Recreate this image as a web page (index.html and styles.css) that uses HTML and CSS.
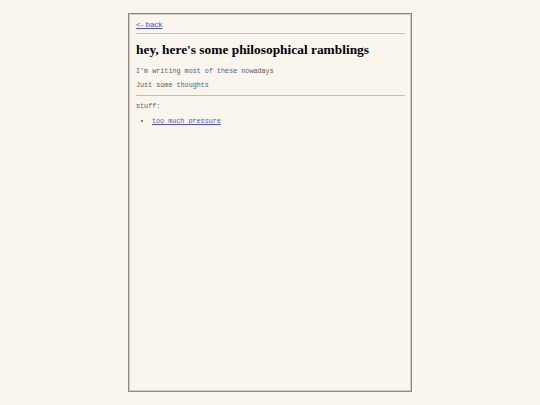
FILE: index.html
```html
<!DOCTYPE html>
<html>
<head>
<meta charset="utf-8">
<link rel="stylesheet" href="styles.css">
</head>
<body>
<div class="page">
  <a class="back" href="#">&lt;- back</a>
  <hr class="rule">
  <h1 class="title">hey, here's some philosophical ramblings</h1>
  <p class="text text-first">I'm writing most of these nowadays</p>
  <p class="text">Just some thoughts</p>
  <hr class="rule rule-mid">
  <p class="text">stuff:</p>
  <ul class="list">
    <li><a href="#">too much pressure</a></li>
  </ul>
</div>
</body>
</html>
```
FILE: styles.css
```css
html, body {
  margin: 0;
  padding: 0;
  background: #faf6ee;
}
.page {
  box-sizing: border-box;
  width: 284px;
  height: 379px;
  margin: 13px auto 0;
  border: 1px solid #8e8b85;
  box-shadow: inset 0 0 0 1px #cfcbc2;
  padding: 6px 6px 0 6px;
}
.back {
  display: block;
  font-family: "Liberation Sans", Arial, sans-serif;
  font-size: 8px;
  line-height: 10px;
  color: #5050dd;
  margin-left: 1px;
}
.rule {
  border: 0;
  border-top: 1px solid #c4c0b8;
  margin: 3px 0 0 1px;
  height: 0;
}
.rule-mid {
  margin-top: 6px;
}
.title {
  font-family: "Liberation Serif", "Times New Roman", serif;
  font-size: 13.4px;
  font-weight: bold;
  color: #000;
  white-space: nowrap;
  margin: 6px 0 0 1px;
  line-height: 20px;
}
.text {
  font-family: "Liberation Mono", "Courier New", monospace;
  font-size: 6.75px;
  color: #5a5a5a;
  margin: 6px 0 0 1px;
  line-height: 8px;
}
.text-first {
  margin-top: 7px;
}
.list {
  font-family: "Liberation Mono", "Courier New", monospace;
  font-size: 6.75px;
  line-height: 8px;
  color: #555;
  margin: 7px 0 0 0;
  padding-left: 17px;
}
.list a {
  color: #5050dd;
}
```
